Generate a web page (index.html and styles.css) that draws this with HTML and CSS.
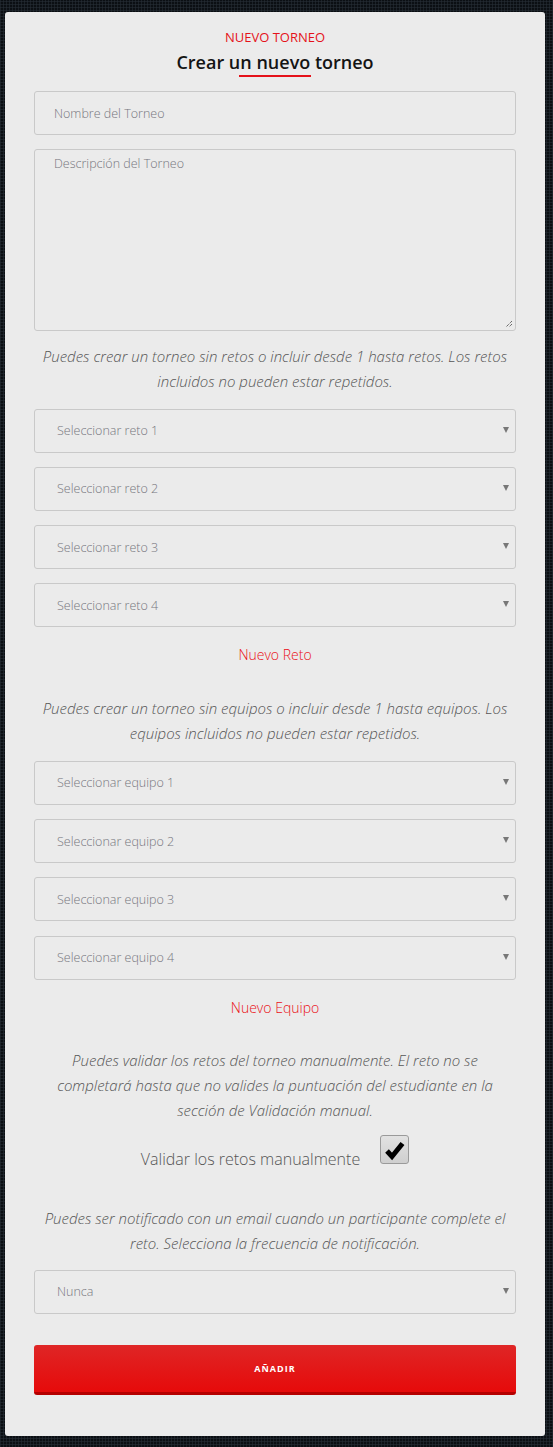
FILE: index.html
```html
<!DOCTYPE html>
<html lang="es">
<head>
<meta charset="utf-8">
<title>Nuevo torneo</title>
<link rel="stylesheet" href="styles.css">
</head>
<body>
<main class="card">
  <p class="eyebrow">NUEVO TORNEO</p>
  <h1 class="title">Crear un nuevo torneo</h1>
  <div class="title-bar"></div>

  <div class="field input"><span class="ph">Nombre del Torneo</span></div>
  <div class="field textarea">
    <span class="ph">Descripción del Torneo</span>
    <svg class="grip" width="8" height="8" viewBox="0 0 8 8"><path d="M7 1 L1 7 M7 4 L4 7" stroke="#333" stroke-width="1" stroke-dasharray="1 1" fill="none"/></svg>
  </div>

  <p class="note">Puedes crear un torneo sin retos o incluir desde 1 hasta retos. Los retos incluidos no pueden estar repetidos.</p>

  <div class="selects">
    <div class="field select"><span class="ph">Seleccionar reto 1</span><span class="caret"></span></div>
    <div class="field select"><span class="ph">Seleccionar reto 2</span><span class="caret"></span></div>
    <div class="field select"><span class="ph">Seleccionar reto 3</span><span class="caret"></span></div>
    <div class="field select"><span class="ph">Seleccionar reto 4</span><span class="caret"></span></div>
  </div>

  <a class="link link-reto">Nuevo Reto</a>

  <p class="note note-2">Puedes crear un torneo sin equipos o incluir desde 1 hasta equipos. Los equipos incluidos no pueden estar repetidos.</p>

  <div class="selects">
    <div class="field select"><span class="ph">Seleccionar equipo 1</span><span class="caret"></span></div>
    <div class="field select"><span class="ph">Seleccionar equipo 2</span><span class="caret"></span></div>
    <div class="field select"><span class="ph">Seleccionar equipo 3</span><span class="caret"></span></div>
    <div class="field select"><span class="ph">Seleccionar equipo 4</span><span class="caret"></span></div>
  </div>

  <a class="link link-equipo">Nuevo Equipo</a>

  <p class="note note-3">Puedes validar los retos del torneo manualmente. El reto no se completará hasta que no valides la puntuación del estudiante en la sección de Validación manual.</p>

  <div class="check-row">
    <span class="check-label">Validar los retos manualmente</span>
    <span class="checkbox">
      <svg width="27" height="27" viewBox="0 0 27 27"><polyline points="6,15 11,20.5 21.5,7.5" fill="none" stroke="#000" stroke-width="5" stroke-linejoin="miter" stroke-linecap="butt"/></svg>
    </span>
  </div>

  <p class="note note-4">Puedes ser notificado con un email cuando un participante complete el reto. Selecciona la frecuencia de notificación.</p>

  <div class="field select select-nunca"><span class="ph">Nunca</span><span class="caret"></span></div>

  <button class="btn" type="button">AÑADIR</button>
</main>
</body>
</html>
```
FILE: styles.css
```css
* { box-sizing: border-box; }

html, body { margin: 0; padding: 0; }

body {
  background-color: #0b0f13;
  background-image:
    repeating-linear-gradient(0deg, rgba(40,48,56,0.55) 0 1px, transparent 1px 3px),
    repeating-linear-gradient(90deg, rgba(40,48,56,0.55) 0 1px, transparent 1px 3px);
  font-family: "Open Sans", "Liberation Sans", sans-serif;
  padding: 12px 8px 12px 5px;
}

.card {
  background: #ebebeb;
  border-radius: 3px;
  padding: 16px 29px 41px;
  display: flex;
  flex-direction: column;
}

.eyebrow {
  margin: 0;
  text-align: center;
  color: #e5121a;
  font-size: 13px;
  line-height: 18px;
  font-weight: 400;
}

.title {
  margin: 4px 0 0;
  text-align: center;
  font-size: 18px;
  line-height: 24px;
  font-weight: 600;
  color: #141414;
}

.title-bar {
  width: 72px;
  height: 2px;
  background: #e5121a;
  margin: 1px auto 0;
}

.field {
  border: 1px solid #c9c9c9;
  border-radius: 3px;
  background: #ebebeb;
  height: 44px;
}

.ph {
  color: #76767e;
  font-size: 12.5px;
  font-weight: 300;
}

.input {
  margin-top: 14px;
  display: flex;
  align-items: center;
  padding-left: 19px;
}

.textarea {
  margin-top: 14px;
  height: 182px;
  padding: 5px 0 0 19px;
  display: flex;
  flex-direction: column;
  justify-content: space-between;
}

.textarea .ph { line-height: 18px; }

.grip {
  align-self: flex-end;
  margin: 0 2px 2px 0;
}

.note {
  margin: 13px 0 0;
  text-align: center;
  font-style: italic;
  font-size: 15px;
  line-height: 25px;
  color: #555;
  font-weight: 300;
  padding: 0 4px;
}

.selects {
  display: flex;
  flex-direction: column;
  gap: 14.3px;
  margin-top: 14.5px;
}

.select {
  display: flex;
  align-items: center;
  justify-content: space-between;
  padding: 0 6px 0 22px;
}

.caret {
  width: 0;
  height: 0;
  border-left: 3px solid transparent;
  border-right: 3px solid transparent;
  border-top: 6px solid #777;
  margin-top: -2px;
}

.link {
  display: block;
  text-align: center;
  color: #ea0f16;
  font-size: 14px;
  line-height: 20px;
  font-weight: 300;
  cursor: pointer;
}

.link-reto { margin-top: 18px; }
.link-equipo { margin-top: 18px; }

.note-2 { margin-top: 31px; }
.note-3 { margin-top: 30px; }

.check-row {
  margin-top: 12px;
  display: flex;
  justify-content: center;
  align-items: flex-start;
  gap: 20px;
}

.check-label {
  margin-top: 14px;
  font-size: 16px;
  line-height: 20px;
  font-weight: 300;
  color: #555;
}

.checkbox {
  width: 29px;
  height: 29px;
  border: 1px solid #9a9a9a;
  border-radius: 3px;
  background: linear-gradient(#e2e2e2, #cfcfcf);
  display: flex;
  align-items: center;
  justify-content: center;
}

.note-4 { margin-top: 37px; }

.select-nunca { margin-top: 14px; }

.btn {
  margin-top: 31px;
  height: 50px;
  border: 0;
  border-bottom: 3px solid #b50000;
  border-radius: 3px;
  background: linear-gradient(#df2626, #e60a0a);
  color: #fff;
  font-family: "Open Sans", "Liberation Sans", sans-serif;
  font-size: 9px;
  font-weight: 700;
  letter-spacing: 1px;
  padding: 0;
}
```
